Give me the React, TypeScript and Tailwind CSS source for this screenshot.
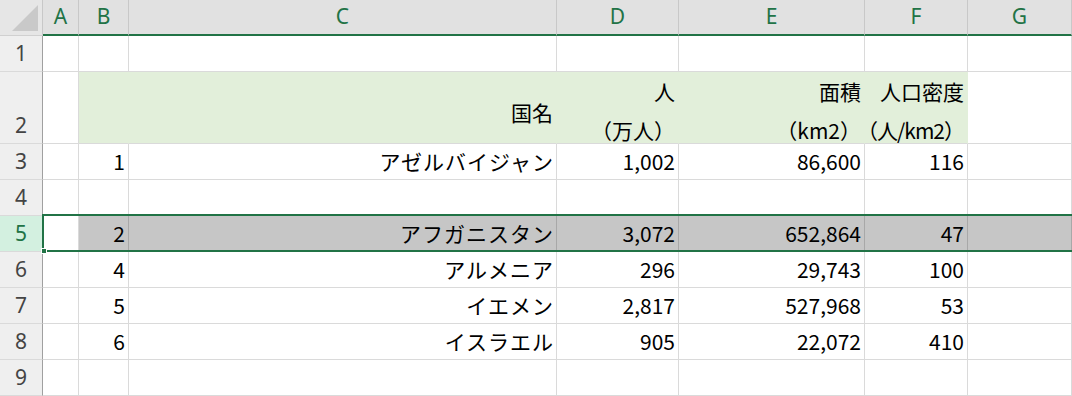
import React from "react";

const letters = ["A", "B", "C", "D", "E", "F", "G"];

type Row = { n: number; cells: string[] };

const rows: Row[] = [
    { n: 3, cells: ["1", "アゼルバイジャン", "1,002", "86,600", "116"] },
    { n: 4, cells: [] },
    { n: 5, cells: ["2", "アフガニスタン", "3,072", "652,864", "47"] },
    { n: 6, cells: ["4", "アルメニア", "296", "29,743", "100"] },
    { n: 7, cells: ["5", "イエメン", "2,817", "527,968", "53"] },
    { n: 8, cells: ["6", "イスラエル", "905", "22,072", "410"] },
    { n: 9, cells: [] },
];

const grid =
    "grid grid-cols-[43px_36px_50px_428px_122px_186px_103px_1fr]";
const cellFont = {
    fontFamily: '"Noto Sans CJK JP", "Noto Sans", sans-serif',
};
const headFont = { fontFamily: '"Noto Sans", "Open Sans", sans-serif' };

const RowHeader = ({ n, tall, active }: { n: number; tall?: boolean; active?: boolean }) => (
    <div
        className={`flex items-center justify-center border-r border-r-[#a0a0a0] border-b border-b-[#dadada] text-[21px] ${
            tall ? "h-[72px] pt-[36px]" : "h-[36px]"
        } ${active ? "bg-[#d3f0e0] text-[#217346]" : "bg-[#efefef] text-[#444]"}`}
        style={headFont}
    >
        {n}
    </div>
);

const Cell = ({
    text,
    selected,
    white,
    kana,
}: {
    text?: string;
    selected?: boolean;
    white?: boolean;
    kana?: boolean;
}) => (
    <div
        className={`flex h-[36px] items-center justify-end border-r border-b text-[21px] text-black ${
            kana ? "pr-[2px] tracking-[1px]" : "pr-[3px]"
        } ${
            selected && !white
                ? "bg-[#c6c6c6] border-r-[#a8a8a8] border-b-[#dadada]"
                : "bg-white border-[#dadada]"
        }`}
        style={cellFont}
    >
        {text}
    </div>
);

const HeadCell = ({
    top,
    bottom,
    green,
    tight,
}: {
    top?: string;
    bottom?: string;
    green?: boolean;
    tight?: boolean;
}) => (
    <div
        className={`flex h-[72px] items-center justify-end border-r border-b border-[#dadada] pt-[9px] pr-[3px] text-[21px] text-black ${
            green ? "bg-[#e2efda] border-r-[#e2efda]" : "bg-white"
        }`}
        style={cellFont}
    >
        <div className="flex flex-col items-end">
            {top && <span className="leading-[37px]">{top}</span>}
            {bottom && (
                <span className={`leading-[41px] ${tight ? "tracking-[-1px]" : ""}`}>
                    {bottom}
                </span>
            )}
        </div>
    </div>
);

export default function App() {
    return (
        <div className="relative h-[396px] w-[1072px] overflow-hidden bg-white">
            {/* column headers */}
            <div className={`${grid} h-[36px]`}>
                <div className="relative border-r border-r-[#c8c8c8] border-b border-b-[#d0d0d0] bg-[#e6e6e6]">
                    <svg className="absolute left-0 top-0" width="42" height="35">
                        <polygon points="12,31 38,5 38,31" fill="#c9c9c9" />
                    </svg>
                </div>
                {letters.map((l) => (
                    <div
                        key={l}
                        className="flex items-center justify-center border-r border-r-[#c8c8c8] border-b-2 border-b-[#217346] bg-[#e1e1e1] pb-[1px] text-[21px] text-[#217346]"
                        style={headFont}
                    >
                        {l}
                    </div>
                ))}
            </div>

            {/* row 1 */}
            <div className={grid}>
                <RowHeader n={1} />
                {letters.map((l) => (
                    <Cell key={l} />
                ))}
            </div>

            {/* row 2 - table header */}
            <div className={grid}>
                <RowHeader n={2} tall />
                <HeadCell />
                <HeadCell green />
                <HeadCell green top="国名" />
                <HeadCell green top="人" bottom="（万人）" />
                <HeadCell green top="面積" bottom="（km2）" />
                <HeadCell green top="人口密度" bottom="（人/km2）" tight />
                <HeadCell />
            </div>

            {rows.map((r) => {
                const sel = r.n === 5;
                return (
                    <div key={r.n} className={grid}>
                        <RowHeader n={r.n} active={sel} />
                        <Cell selected={sel} white />
                        <Cell text={r.cells[0]} selected={sel} />
                        <Cell text={r.cells[1]} selected={sel} kana />
                        <Cell text={r.cells[2]} selected={sel} />
                        <Cell text={r.cells[3]} selected={sel} />
                        <Cell text={r.cells[4]} selected={sel} />
                        <Cell selected={sel} />
                    </div>
                );
            })}

            {/* selection outline, row 5 */}
            <div className="pointer-events-none absolute left-[42px] right-0 top-[214px] h-[38px] border-2 border-r-0 border-[#217346]" />
            <div className="pointer-events-none absolute left-[41px] top-[248px] h-[6px] w-[6px] border border-white bg-[#217346]" />
        </div>
    );
}
